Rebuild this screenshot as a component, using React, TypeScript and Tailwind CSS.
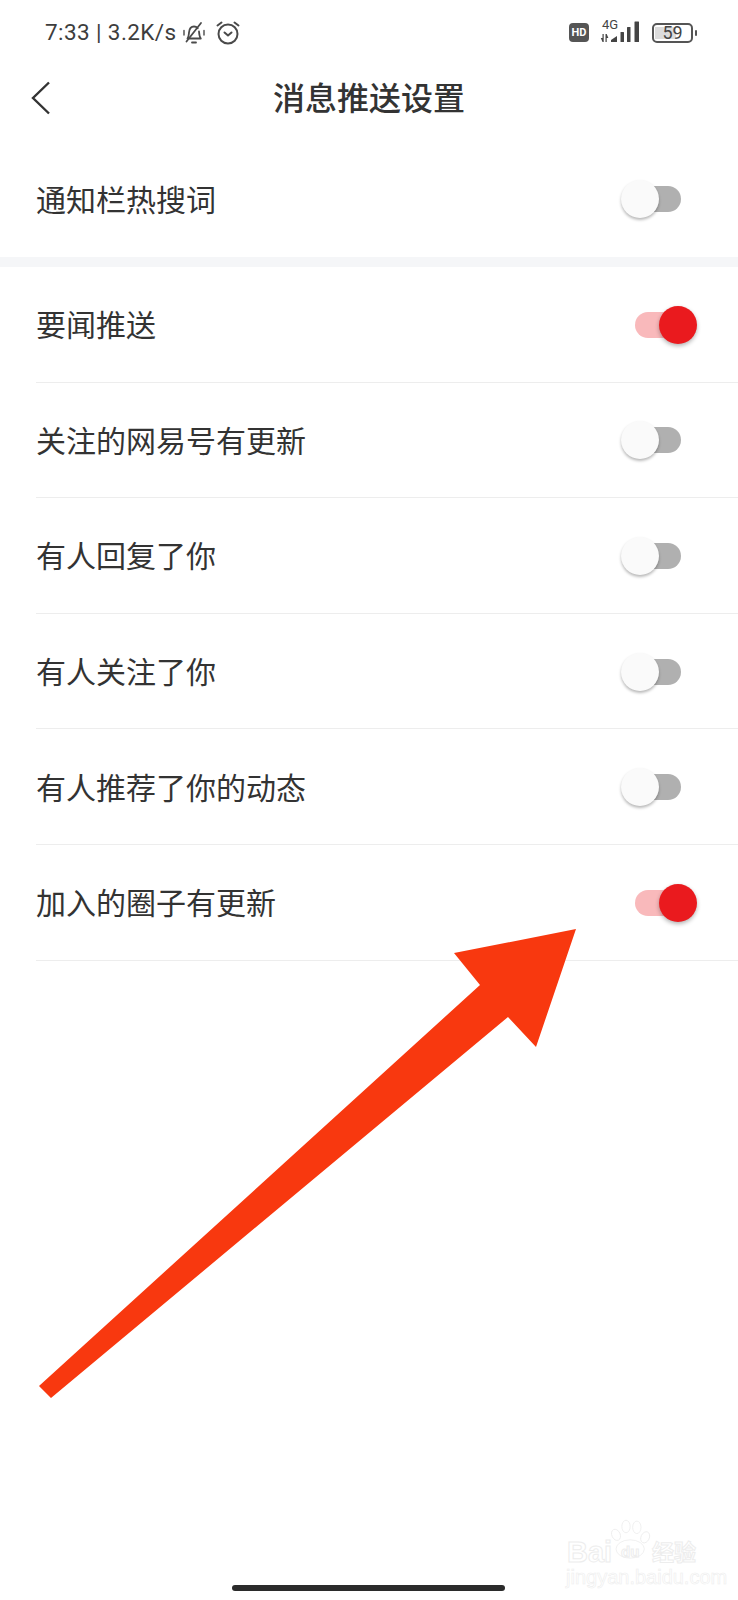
const CJK = "font-['Noto_Sans_CJK_SC','Noto_Sans',sans-serif]"

const rows = [
  { label: '要闻推送', on: true },
  { label: '关注的网易号有更新', on: false },
  { label: '有人回复了你', on: false },
  { label: '有人关注了你', on: false },
  { label: '有人推荐了你的动态', on: false },
  { label: '加入的圈子有更新', on: true },
]

function Toggle({ on }: { on: boolean }) {
  if (on) {
    return (
      <div className="relative mr-[57px] mt-[1px] h-[26px] w-[46px] shrink-0 rounded-full bg-[#f9b9bb]">
        <div className="absolute right-[-16px] top-[-6px] h-[38px] w-[38px] rounded-full bg-[#ea1a1e] shadow-[0_2px_4px_rgba(0,0,0,0.3)]" />
      </div>
    )
  }
  return (
    <div className="relative mr-[57px] mt-[1px] h-[26px] w-[46px] shrink-0 rounded-full bg-[#b0b0b0]">
      <div className="absolute left-[-14px] top-[-6px] h-[38px] w-[38px] rounded-full bg-[#fafafa] shadow-[0_2px_3px_rgba(0,0,0,0.28)]" />
    </div>
  )
}

function MuteBell() {
  return (
    <svg viewBox="0 0 24 24" className="h-[24px] w-[24px]" fill="none" stroke="#4a4a4a" strokeWidth="1.800" strokeLinecap="round" strokeLinejoin="round">
      <path d="M5.500 17.500c1.300-1.600 1.300-3.500 1.500-6 .3-3.600 2.400-6 5-6 1.500 0 2.800.6 3.700 1.700M17 10.500c.2 3 .4 5.200 1.800 7H7.500" />
      <path d="M10 21.500h4" />
      <path d="M4.500 20.500 19 2" />
      <path d="M2 9.500v4.500M22 9.500v4.500" strokeWidth="1.400" />
    </svg>
  )
}

function Alarm() {
  return (
    <svg viewBox="0 0 26 26" className="h-[26px] w-[26px]" fill="none" stroke="#4a4a4a" strokeWidth="2" strokeLinecap="round" strokeLinejoin="round">
      <circle cx="13" cy="14" r="9.500" />
      <path d="M9.500 12.500l3.500 3 3.500-3" />
      <path d="M2.500 5.500 6.500 2.500M23.500 5.500 19.500 2.500" />
    </svg>
  )
}

function SignalIcon() {
  return (
    <div className="relative h-[24px] w-[40px]">
      <span className="absolute left-[2px] top-[-3px] font-['Roboto',sans-serif] text-[13px] leading-[14px] text-[#444]">4G</span>
      <svg viewBox="0 0 40 24" className="absolute inset-0 h-[24px] w-[40px]" fill="#444">
        <path d="M2.500 13h1.200v8H2.500zM0.800 17l1.700 4v-4zM5.500 13h1.200v8H5.500zM6.700 13l1.700 4H6.700z" />
        <path d="M11 21v-2l6-4v6z" />
        <rect x="20.500" y="11" width="3.500" height="10" rx="0.500" />
        <rect x="27" y="6" width="3.500" height="15" rx="0.500" />
        <rect x="34.500" y="0.500" width="4.500" height="20.500" rx="0.500" />
      </svg>
    </div>
  )
}

function Battery() {
  return (
    <div className="flex items-center gap-[2px]">
      <div className="relative flex h-[20px] w-[41px] items-center justify-center overflow-hidden rounded-[5px] border-2 border-[#555]">
        <div className="absolute inset-y-[2px] left-[1px] w-[21px] bg-[#dcdcdc]" />
        <span className="relative font-['Roboto',sans-serif] text-[18px] leading-none text-[#444]">59</span>
      </div>
      <div className="h-[6px] w-[2px] rounded-sm bg-[#555]" />
    </div>
  )
}

function StatusBar() {
  return (
    <div className="flex h-[65px] items-center justify-between pl-[45px] pr-[41px]">
      <div className="flex items-center font-['Roboto',sans-serif] text-[#3d3d3d]">
        <span className="text-[22.500px] leading-none tracking-[0.4px]">7:33 | 3.2K/s</span>
        <span className="ml-[6px] flex"><MuteBell /></span>
        <span className="ml-[9px] flex"><Alarm /></span>
      </div>
      <div className="flex items-center">
        <div className="flex h-[19px] w-[20px] items-center justify-center rounded-[4px] bg-[#555] font-['Roboto',sans-serif] text-[11px] font-bold leading-none text-white">HD</div>
        <div className="ml-[11px]"><SignalIcon /></div>
        <div className="ml-[12px]"><Battery /></div>
      </div>
    </div>
  )
}

function Header() {
  return (
    <div className="relative flex h-[62px] items-center justify-center">
      <svg viewBox="0 0 20 34" className="absolute left-[31px] top-[16px] h-[34px] w-[20px]" fill="none" stroke="#333" strokeWidth="2.400">
        <path d="M18 1.500 2 17l16 15.500" />
      </svg>
      <h1 className="text-[32px] font-medium leading-none text-[#333]">消息推送设置</h1>
    </div>
  )
}

function Watermark() {
  const letters = "[-webkit-text-stroke:1px_#ededed] text-white font-['Liberation_Sans',sans-serif]"
  return (
    <div className="pointer-events-none absolute left-[565px] top-[1518px] h-[70px] w-[140px]">
      <svg viewBox="0 0 60 50" className="absolute left-[41px] top-0 h-[42px] w-[50px]" fill="#fff" stroke="#ededed" strokeWidth="1">
        <ellipse cx="12" cy="20" rx="5" ry="7" transform="rotate(-25 12 20)" />
        <ellipse cx="24" cy="10" rx="5" ry="7.500" />
        <ellipse cx="37" cy="11" rx="5" ry="7.500" />
        <ellipse cx="47" cy="23" rx="5" ry="7" transform="rotate(25 47 23)" />
        <ellipse cx="29" cy="37" rx="17" ry="11" />
      </svg>
      <span className={`absolute left-[2px] top-[20px] text-[29px] font-bold leading-none ${letters}`}>Bai</span>
      <span className={`absolute left-[56px] top-[26px] text-[15px] font-bold leading-none ${letters}`}>du</span>
      <span className={`absolute left-[87px] top-[21px] text-[22px] font-bold leading-none ${letters} ${CJK}`}>经验</span>
      <span className="absolute left-[1px] top-[49px] font-['Liberation_Sans',sans-serif] text-[20px] leading-none text-white [-webkit-text-stroke:0.6px_#eeeeee]">jingyan.baidu.com</span>
    </div>
  )
}

export default function App() {
  return (
    <div className={`relative h-[1600px] w-[738px] overflow-hidden bg-white ${CJK}`}>
      <StatusBar />
      <Header />
      <div className="flex h-[130px] items-center justify-between pl-[36px] pt-[12px]">
        <span className="text-[30px] leading-none text-[#333]">通知栏热搜词</span>
        <Toggle on={false} />
      </div>
      <div className="h-[10px] bg-[#f5f6f8]" />
      <div className="ml-[36px]">
        {rows.map((row) => (
          <div key={row.label} className="flex h-[115.600px] items-center justify-between border-b border-[#ededed]">
            <span className="mb-[2px] text-[30px] leading-none text-[#333]">{row.label}</span>
            <Toggle on={row.on} />
          </div>
        ))}
      </div>
      <svg viewBox="0 0 738 1600" className="pointer-events-none absolute inset-0 h-[1600px] w-[738px]">
        <polygon fill="#f8380f" points="576,929 454,953 480,985 39,1386 51,1398 508,1017 536,1047" />
      </svg>
      <Watermark />
      <div className="absolute bottom-[9px] left-[232px] h-[6px] w-[273px] rounded-full bg-[#2b2b2b]" />
    </div>
  )
}
